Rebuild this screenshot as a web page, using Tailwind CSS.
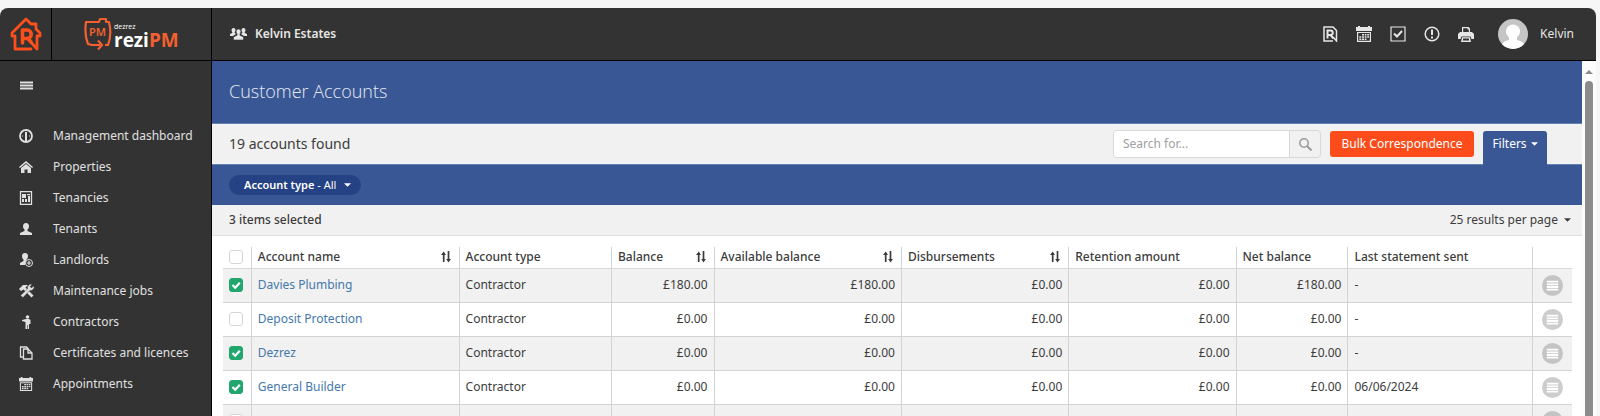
<!DOCTYPE html>
<html lang="en">
<head>
    <meta charset="UTF-8">
    <meta name="viewport" content="width=device-width, initial-scale=1.0">
    <title>Customer Accounts</title>
    <script src="https://cdn.jsdelivr.net/npm/@tailwindcss/browser@4"></script>
</head>

<body class="h-screen overflow-hidden bg-[#f6f6f6] pt-2 pr-1 font-['Noto_Sans','Open_Sans',sans-serif] text-xs text-[#3c3c3c]">
    <!-- Icons used more than once -->
    <svg class="hidden">
        <symbol id="sort" viewBox="0 0 10 12">
            <path d="M2.700 11V2M7.500 0v9" fill="none" stroke="currentColor" stroke-width="1.700"/>
            <path d="M0 4 2.700.5 5 4zM5.200 8 7.500 11.500 10 8z" fill="currentColor"/>
        </symbol>
        <symbol id="caret" viewBox="0 0 8 4"><path d="M0 0h8L4 4z" fill="currentColor"/></symbol>
        <symbol id="calendar" viewBox="0 0 16 16">
            <path fill="currentColor" fill-rule="evenodd" d="M0 1h2V0h2v1h8V0h2v1h2v4H0zM1 6h14v10H1zM2.200 7v7.800h11.600V7z"/>
            <path fill="currentColor" d="M6 8h2v1.500H6zM8.700 8h1.800v1.500H8.700zM11.200 8H13v1.500h-1.800zM3.300 10.200h2v1.500h-2zM6 10.200h2v1.500H6zM8.700 10.200h1.800v1.500H8.700zM11.200 10.200H13v1.500h-1.800zM3.300 12.400h2v1.500h-2zM6 12.400h2v1.500H6zM8.700 12.400h1.800v1.500H8.700z"/>
        </symbol>
        <symbol id="rowmenu" viewBox="0 0 22 22">
            <circle cx="11" cy="11" r="11" fill="currentColor"/>
            <path d="M5 7h12M5 9.800h12M5 12.600h12M5 15.400h12" stroke="#fff" stroke-width="1.900"/>
        </symbol>
        <symbol id="tick" viewBox="0 0 14 14"><path d="m3.500 7 2.700 2.700 4.600-4.900" fill="none" stroke="#fff" stroke-width="2.200"/></symbol>
    </svg>

    <div class="flex h-full flex-col overflow-hidden rounded-t-lg bg-[#333]">
        <!-- Top bar -->
        <header class="flex h-[53px] shrink-0 items-stretch border-b border-black text-[#e6e6e6]">
            <a href="#" aria-label="Rezi" class="flex w-[52px] items-center justify-center border-r border-black">
                <svg class="h-[34px] w-8" viewBox="0 0 32 34" fill="none" stroke="#fc4f1c" stroke-width="2.800" stroke-linejoin="round" stroke-linecap="round">
                    <path d="M21 32H5V19H2v-3L16 2l5 5h5v5l4 4v3h-3v13l-8-9"/>
                    <path d="M12.500 26V13H17a4.200 4.200 0 0 1 0 8.500h-4M18 21.500l3 3.500" stroke-width="3.600"/>
                </svg>
            </a>
            <a href="#" aria-label="Dezrez Rezi PM" class="flex w-40 items-center gap-[2px] border-r border-black pl-8">
                <svg class="h-[34px] w-7" viewBox="0 0 28 34" fill="none" stroke="#f4602f" stroke-width="2.200">
                    <path d="M8 28 4 27C1 20 1 12 2 5h13l1-3h6v3h3c2 8 2 15-1 23h-3" stroke-linejoin="round"/>
                    <path d="M7 28h9M14 23.500l4 4.500-4 4.500"/>
                    <text x="13.500" y="19" text-anchor="middle" fill="#f4602f" stroke="none" font-size="11" font-weight="600">PM</text>
                </svg>
                <span class="flex flex-col pt-1 font-['Open_Sans',sans-serif]">
                    <span class="text-[7px] leading-[8px] text-white">dezrez</span>
                    <span class="text-[19px] leading-[19px] font-bold text-white">rezi<span class="text-[#f4602f]">PM</span></span>
                </span>
            </a>
            <div class="flex items-center gap-2 pl-[18px] font-semibold">
                <svg class="h-3 w-[17px]" viewBox="0 0 17 12" fill="currentColor">
                    <path d="M3.500 0a2 2 0 0 1 2 2c0 1-.5 1.500-.8 2.200V5L6 6 3 8H0V6l2.300-1v-.8C2 3.500 1.500 3 1.500 2a2 2 0 0 1 2-2zM13.500 0a2 2 0 0 1 2 2c0 1-.5 1.500-.8 2.200V5L17 6v2h-3l-3-2 1.300-1v-.8c-.3-.7-.8-1.200-.8-2.200a2 2 0 0 1 2-2z"/>
                    <path d="M8.500 1a2.400 2.400 0 0 1 2.400 2.500c0 1.200-.6 2-1 2.700v1l3.600 1.800v3h-10V9l3.600-1.800v-1c-.4-.7-1-1.500-1-2.700A2.400 2.400 0 0 1 8.500 1z" stroke="#333" stroke-width=".6"/>
                </svg>
                Kelvin Estates
            </div>
            <div class="ml-auto flex items-center gap-[18px] pr-[22px]">
                <button type="button" aria-label="Rezi">
                    <svg class="size-4" viewBox="0 0 16 16" fill="none" stroke="currentColor">
                        <path d="M11 15H2V1h9l3.500 3.500V15L11 11" stroke-width="1.500"/><path d="M5.500 12.500v-8h3a2.200 2.200 0 0 1 0 4.500h-3M8.500 9l3 3.500" stroke-width="2"/>
                    </svg>
                </button>
                <button type="button" aria-label="Calendar"><svg class="size-4"><use href="#calendar"/></svg></button>
                <button type="button" aria-label="Tasks">
                    <svg class="size-4" viewBox="0 0 16 16" fill="none" stroke="currentColor"><path d="M1 1h14v14H1z" stroke-width="1.200"/><path d="m4 7.500 3 3L12 5" stroke-width="2"/></svg>
                </button>
                <button type="button" aria-label="Alerts">
                    <svg class="size-4" viewBox="0 0 16 16" fill="none" stroke="currentColor"><circle cx="8" cy="8" r="6.800" stroke-width="1.500"/><path d="M8 3.500V9M8 10.500v2" stroke-width="2"/></svg>
                </button>
                <button type="button" aria-label="Print">
                    <svg class="size-4" viewBox="0 0 16 16" fill="currentColor"><path fill-rule="evenodd" d="M4 1h6.500L12 2.500V6h2l2 2v5h-2.500l-1-2.500h-9l-1 2.500H0V8l2-2h2zM5.200 2.200V6h5.600V3.500H9.500V2.200z"/><path fill-rule="evenodd" d="M4 11.200h8l1 4.800H3zM5.200 12.400l-.4 2.200h6.400l-.4-2.200z"/></svg>
                </button>
                <a href="#" class="ml-[6px] flex items-center gap-3">
                    <svg class="size-[30px]" viewBox="0 0 30 30">
                        <clipPath id="round"><circle cx="15" cy="15" r="15"/></clipPath>
                        <g clip-path="url(#round)"><path fill="#c5c5c5" d="M0 0h30v30H0z"/><circle cx="15" cy="12.500" r="7" fill="#fff"/><path fill="#fff" d="M11 17h8v4c5 1 8 3 8 9H3c0-6 3-8 8-9z"/></g>
                    </svg>
                    Kelvin
                </a>
            </div>
        </header>

        <div class="flex min-h-0 flex-1">
            <!-- Side menu -->
            <nav class="w-[212px] shrink-0 border-r border-black text-[#e0e0e0]">
                <button type="button" aria-label="Toggle menu" class="mt-[19px] ml-5 block">
                    <svg class="h-3 w-[13px]" viewBox="0 0 13 12"><path d="M0 2.500h13M0 5.500h13M0 8.500h13" stroke="currentColor" stroke-width="2"/></svg>
                </button>
                <ul class="mt-7 leading-[31px]">
                    <li><a href="#" class="flex items-center gap-5 pl-[19px]">
                        <svg class="size-[14px]" viewBox="0 0 14 14" fill="none" stroke="currentColor"><circle cx="7" cy="7" r="6" stroke-width="1.800"/><path d="M7 3v9" stroke-width="2"/><path d="M3 7h1M10 7h1"/></svg>
                        Management dashboard</a></li>
                    <li><a href="#" class="flex items-center gap-5 pl-[19px]">
                        <svg class="size-[14px]" viewBox="0 0 14 14" fill="currentColor"><path d="m7 1 7 6-.9 1L7 3 .9 8 0 7z"/><path d="m7 4 5 4v5H8.500V9.500h-3V13H2V8z"/></svg>
                        Properties</a></li>
                    <li><a href="#" class="flex items-center gap-5 pl-[19px]">
                        <svg class="size-[14px]" viewBox="0 0 14 14"><path d="M1.500.7h11v12.600h-11z" fill="none" stroke="currentColor" stroke-width="1.300"/><path fill="currentColor" d="M3 3h4v4H3zM8 3h3v1.200H8zM9 5h2v6H9zM3 8h2v3H3zM6 8h2v3H6z"/></svg>
                        Tenancies</a></li>
                    <li><a href="#" class="flex items-center gap-5 pl-[19px]">
                        <svg class="size-[14px]" viewBox="0 0 14 14" fill="currentColor"><path d="M7 1c2 0 3 1.300 3 3.200C10 6 9 7 8.500 7.500V9L13 11v2H1v-2l4.500-2V7.500C5 7 4 6 4 4.200 4 2.300 5 1 7 1z"/></svg>
                        Tenants</a></li>
                    <li><a href="#" class="flex items-center gap-5 pl-[19px]">
                        <svg class="size-[14px]" viewBox="0 0 14 14" fill="currentColor"><path d="M6 0c2 0 3 1.300 3 3.200C9 5 8 6 7.500 6.500L6 12H1v-2l3.500-2V6.500C4 6 3 5 3 3.200 3 1.300 4 0 6 0z"/><circle cx="10" cy="10" r="3.500" fill="#333" stroke="currentColor"/><path d="M8 10h4M10 8v4" stroke="currentColor" stroke-width="1.200"/></svg>
                        Landlords</a></li>
                    <li><a href="#" class="flex items-center gap-[18px] pl-[19px]">
                        <svg class="h-[14px] w-4" viewBox="0 0 16 14" fill="currentColor"><path d="M0 5 4 1h5L6.500 3.500l8 8-2 2-8-8L2 7z"/><path d="m1.500 11.500 7-6.500V2.500L11 0l2 .5-2 2 1.500 1.500 2-2 .8 2-2.500 2.500h-2L4 13.500z" stroke="#333" stroke-width=".4"/></svg>
                        Maintenance jobs</a></li>
                    <li><a href="#" class="flex items-center gap-5 pl-[19px]">
                        <svg class="size-[14px]" viewBox="0 0 14 14" fill="currentColor"><circle cx="8.500" cy="2" r="1.800"/><path d="m3 5 4-1h3l1.500 1v4H10v5H8.800v-4h-.6v4H6.500V7L3 6z"/></svg>
                        Contractors</a></li>
                    <li><a href="#" class="flex items-center gap-5 pl-[19px]">
                        <svg class="size-[14px]" viewBox="0 0 14 14" fill="none" stroke="currentColor" stroke-width="1.300"><path d="M4.500 3H9l4 4v6H4.500zM9 3v4h4M4.500 11h-3V1h6l2 2"/></svg>
                        Certificates and licences</a></li>
                    <li><a href="#" class="flex items-center gap-5 pl-[19px]">
                        <svg class="size-[14px]"><use href="#calendar"/></svg>
                        Appointments</a></li>
                </ul>
            </nav>

            <!-- Content -->
            <main class="min-w-0 flex-1 overflow-hidden bg-white">
                <h1 class="flex h-[63px] items-center border-b border-[#6681b2] bg-[#3a5795] px-[17px] pb-[2px] font-['Open_Sans',sans-serif] text-lg font-light text-[#e4ebf2]">Customer Accounts</h1>

                <div class="flex h-10 items-center bg-[#f1f1f1] pl-[17px] pr-[35px]">
                    <h2 class="flex-1 text-sm">19 accounts found</h2>
                    <form class="flex h-7 w-[208px] overflow-hidden rounded-sm border border-[#d8d8d8]">
                        <input type="text" aria-label="Search" placeholder="Search for..." class="min-w-0 flex-1 bg-white px-[9px] placeholder:text-[#a0a0a0]">
                        <button type="button" aria-label="Search" class="flex w-[31px] items-center justify-center border-l border-[#d8d8d8] text-[#999]">
                            <svg class="size-[13px]" viewBox="0 0 13 13" fill="none" stroke="currentColor"><circle cx="5" cy="5" r="4.200" stroke-width="1.500"/><path d="m8 8 4.500 4.500" stroke-width="2"/></svg>
                        </button>
                    </form>
                    <button type="button" class="ml-[9px] h-[26px] w-36 rounded-[3px] bg-[#fc4c1b] text-white">Bulk Correspondence</button>
                    <button type="button" class="z-10 ml-[9px] -mb-px flex h-[34px] w-16 items-center justify-center gap-1 self-end rounded-t-[3px] bg-[#3a5795] pb-2 text-white">
                        Filters <svg class="h-1 w-[7px]"><use href="#caret"/></svg>
                    </button>
                </div>

                <div class="flex h-[41px] items-center border-t border-[#6681b2] bg-[#3a5795] px-[17px]">
                    <button type="button" class="flex h-5 items-center rounded-full bg-[#244284] pl-[15px] pr-[10px] text-[11px] text-white">
                        <span><span class="font-semibold">Account type</span> - All</span>
                        <svg class="ml-2 h-1 w-[7px]"><use href="#caret"/></svg>
                    </button>
                </div>

                <div class="flex h-[31px] items-center justify-between border-b border-[#e0e0e0] bg-[#f1f1f1] pl-[17px] pr-[11px]">
                    <span class="font-medium">3 items selected</span>
                    <button type="button" class="flex items-center gap-[6px]">25 results per page <svg class="h-1 w-[7px]"><use href="#caret"/></svg></button>
                </div>

                <div class="pt-[11px] pr-[10px] pl-[11px]">
                    <table class="w-full table-fixed border-collapse">
                        <colgroup>
                            <col class="w-[2.1%]"><col class="w-[15.4%]"><col class="w-[11.3%]"><col class="w-[7.6%]"><col class="w-[13.9%]"><col class="w-[12.4%]"><col class="w-[12.4%]"><col class="w-[8.3%]"><col class="w-[13.7%]"><col class="w-[2.9%]">
                        </colgroup>
                        <thead>
                            <tr class="h-[21px] divide-x divide-[#d3d3d3] border-b border-[#d9d9d9] text-left [&>th]:px-[6px] [&>th]:font-medium">
                                <th><span class="grid"><input type="checkbox" aria-label="Select all" class="size-[14px] appearance-none rounded-[3px] border border-[#d6d6d6] bg-white"></span></th>
                                <th><span class="flex items-center justify-between">Account name <button type="button" aria-label="Sort by account name" class="pr-[2px]"><svg class="h-3 w-[10px]"><use href="#sort"/></svg></button></span></th>
                                <th>Account type</th>
                                <th><span class="flex items-center justify-between">Balance <button type="button" aria-label="Sort by balance" class="pr-[2px]"><svg class="h-3 w-[10px]"><use href="#sort"/></svg></button></span></th>
                                <th><span class="flex items-center justify-between">Available balance <button type="button" aria-label="Sort by available balance" class="pr-[2px]"><svg class="h-3 w-[10px]"><use href="#sort"/></svg></button></span></th>
                                <th><span class="flex items-center justify-between">Disbursements <button type="button" aria-label="Sort by disbursements" class="pr-[2px]"><svg class="h-3 w-[10px]"><use href="#sort"/></svg></button></span></th>
                                <th>Retention amount</th>
                                <th>Net balance</th>
                                <th>Last statement sent</th>
                                <td></td>
                            </tr>
                        </thead>
                        <tbody class="[&>tr]:h-[34px] [&>tr]:divide-x [&>tr]:divide-[#d3d3d3] [&>tr]:border-b [&>tr]:border-[#d3d3d3] [&>tr:nth-child(odd)]:bg-[#f1f1f1] [&_td]:px-[6px]">
                            <tr>
                                <td><span class="grid"><input type="checkbox" checked aria-label="Select Davies Plumbing" class="size-[14px] appearance-none rounded-[3px] border border-[#d6d6d6] bg-white [grid-area:1/1] checked:border-[#21a66e] checked:bg-[#21a66e]"><svg class="pointer-events-none size-[14px] [grid-area:1/1]"><use href="#tick"/></svg></span></td>
                                <td><a href="#" class="text-[#4478ab]">Davies Plumbing</a></td>
                                <td>Contractor</td>
                                <td class="text-right">£180.00</td>
                                <td class="text-right">£180.00</td>
                                <td class="text-right">£0.00</td>
                                <td class="text-right">£0.00</td>
                                <td class="text-right">£180.00</td>
                                <td>-</td>
                                <td><button type="button" aria-label="Actions" class="mx-auto block text-[#c4c4c4]"><svg class="size-[21px]"><use href="#rowmenu"/></svg></button></td>
                            </tr>
                            <tr>
                                <td><span class="grid"><input type="checkbox" aria-label="Select Deposit Protection" class="size-[14px] appearance-none rounded-[3px] border border-[#d6d6d6] bg-white"></span></td>
                                <td><a href="#" class="text-[#4478ab]">Deposit Protection</a></td>
                                <td>Contractor</td>
                                <td class="text-right">£0.00</td>
                                <td class="text-right">£0.00</td>
                                <td class="text-right">£0.00</td>
                                <td class="text-right">£0.00</td>
                                <td class="text-right">£0.00</td>
                                <td>-</td>
                                <td><button type="button" aria-label="Actions" class="mx-auto block text-[#cdcdcd]"><svg class="size-[21px]"><use href="#rowmenu"/></svg></button></td>
                            </tr>
                            <tr>
                                <td><span class="grid"><input type="checkbox" checked aria-label="Select Dezrez" class="size-[14px] appearance-none rounded-[3px] border border-[#d6d6d6] bg-white [grid-area:1/1] checked:border-[#21a66e] checked:bg-[#21a66e]"><svg class="pointer-events-none size-[14px] [grid-area:1/1]"><use href="#tick"/></svg></span></td>
                                <td><a href="#" class="text-[#4478ab]">Dezrez</a></td>
                                <td>Contractor</td>
                                <td class="text-right">£0.00</td>
                                <td class="text-right">£0.00</td>
                                <td class="text-right">£0.00</td>
                                <td class="text-right">£0.00</td>
                                <td class="text-right">£0.00</td>
                                <td>-</td>
                                <td><button type="button" aria-label="Actions" class="mx-auto block text-[#c4c4c4]"><svg class="size-[21px]"><use href="#rowmenu"/></svg></button></td>
                            </tr>
                            <tr>
                                <td><span class="grid"><input type="checkbox" checked aria-label="Select General Builder" class="size-[14px] appearance-none rounded-[3px] border border-[#d6d6d6] bg-white [grid-area:1/1] checked:border-[#21a66e] checked:bg-[#21a66e]"><svg class="pointer-events-none size-[14px] [grid-area:1/1]"><use href="#tick"/></svg></span></td>
                                <td><a href="#" class="text-[#4478ab]">General Builder</a></td>
                                <td>Contractor</td>
                                <td class="text-right">£0.00</td>
                                <td class="text-right">£0.00</td>
                                <td class="text-right">£0.00</td>
                                <td class="text-right">£0.00</td>
                                <td class="text-right">£0.00</td>
                                <td>06/06/2024</td>
                                <td><button type="button" aria-label="Actions" class="mx-auto block text-[#cdcdcd]"><svg class="size-[21px]"><use href="#rowmenu"/></svg></button></td>
                            </tr>
                            <tr>
                                <td><span class="grid"><input type="checkbox" aria-label="Select account" class="size-[14px] appearance-none rounded-[3px] border border-[#d6d6d6] bg-white"></span></td>
                                <td></td>
                                <td></td>
                                <td></td>
                                <td></td>
                                <td></td>
                                <td></td>
                                <td></td>
                                <td></td>
                                <td><button type="button" aria-label="Actions" class="mx-auto block text-[#c4c4c4]"><svg class="size-[21px]"><use href="#rowmenu"/></svg></button></td>
                            </tr>
                        </tbody>
                    </table>
                </div>
            </main>

            <!-- Scroll bar -->
            <div class="flex w-[14px] shrink-0 flex-col items-center bg-[#fcfcfc] pt-[9px] text-[#8b8b8b]">
                <svg class="h-1 w-2 rotate-180"><use href="#caret"/></svg>
                <div class="mt-[7px] w-2 flex-1 rounded-t-full bg-[#8b8b8b]"></div>
            </div>
        </div>
    </div>
</body>
</html>
